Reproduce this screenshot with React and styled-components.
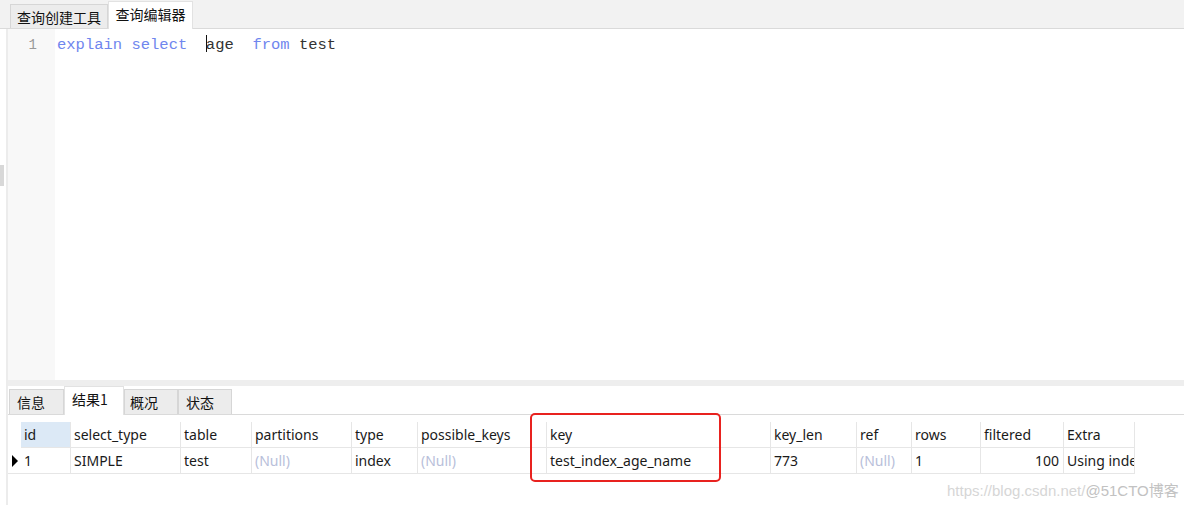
import React from 'react';
import styled, { createGlobalStyle } from 'styled-components';

const Global = createGlobalStyle`
  html, body { margin: 0; padding: 0; background: #fff; }
  #root { width: 1184px; height: 505px; overflow: hidden; }
`;

const Window = styled.div`
  position: relative;
  width: 1184px;
  height: 505px;
  display: flex;
  flex-direction: column;
  font-family: "Noto Sans", "Noto Sans CJK SC", sans-serif;
  color: #222;
  background: #fff;
`;

const TabBar = styled.div`
  display: flex;
  align-items: flex-end;
  height: 28px;
  padding-left: ${p => p.$pad}px;
  background: ${p => p.$bg};
  border-bottom: 1px solid #dadada;
  flex-shrink: 0;
`;

const Tab = styled.div`
  box-sizing: border-box;
  height: ${p => (p.$active ? p.$h + 4 : p.$h)}px;
  width: ${p => p.$w}px;
  display: flex;
  align-items: center;
  justify-content: ${p => (p.$left ? 'flex-start' : 'center')};
  padding-left: ${p => (p.$left ? p.$left : 0)}px;
  font-family: "Noto Sans CJK SC", sans-serif;
  font-size: 14px;
  color: #111;
  background: ${p => (p.$active ? '#fff' : '#ececec')};
  border: 1px solid #d6d6d6;
  border-bottom: none;
  margin-bottom: ${p => (p.$active ? -1 : 0)}px;
  ${p => p.$active && 'border-color: #e2e2e2; padding-bottom: 4px;'}
`;

const Body = styled.div`
  flex: 1;
  display: flex;
  min-height: 0;
`;

const LeftStrip = styled.div`
  width: 6px;
  flex-shrink: 0;
  border-right: 2px solid #ececec;
  background: #fff;
  padding-top: 136px;
`;

const Handle = styled.div`
  width: 4px;
  height: 21px;
  background: #d8d8d8;
`;

const Content = styled.div`
  flex: 1;
  display: flex;
  flex-direction: column;
  min-width: 0;
`;

const Editor = styled.div`
  height: 351px;
  display: flex;
  flex-shrink: 0;
`;

const Gutter = styled.div`
  width: 47px;
  background: #f8f8f8;
  box-sizing: border-box;
  padding: 6px 18px 0 0;
  text-align: right;
  font-family: "Liberation Mono", monospace;
  font-size: 14px;
  line-height: 20px;
  color: #999;
`;

const Code = styled.div`
  flex: 1;
  padding: 6px 0 0 2px;
  font-family: "Liberation Mono", monospace;
  font-size: 15.5px;
  line-height: 20px;
  color: #333;
  white-space: pre;
`;

const Kw = styled.span`
  color: #6f86ee;
`;

const Caret = styled.span`
  display: inline-block;
  width: 1px;
  height: 17px;
  background: #111;
  vertical-align: -3px;
  margin-right: -1px;
`;

const Splitter = styled.div`
  height: 6px;
  background: #eeeeee;
  flex-shrink: 0;
`;

const Results = styled.div`
  flex: 1;
  padding-top: 7px;
`;

const Grid = styled.div`
  display: grid;
  grid-template-columns: ${p => p.$cols};
  width: max-content;
  font-size: 14px;
`;

const Cell = styled.div`
  box-sizing: border-box;
  height: 26px;
  display: flex;
  align-items: center;
  justify-content: ${p => (p.$right ? 'flex-end' : 'flex-start')};
  padding: 0 4px 0 3px;
  white-space: nowrap;
  overflow: hidden;
  border-right: 1px solid #e6e6e6;
  border-bottom: 1px solid #e6e6e6;
  background: ${p => (p.$sel ? '#dce9f6' : '#fff')};
  color: ${p => (p.$null ? '#b8c0da' : '#1a1a1a')};
`;

const Marker = styled.div`
  box-sizing: border-box;
  height: 26px;
  display: flex;
  align-items: center;
  padding-left: 4px;
  border-bottom: 1px solid ${p => (p.$line ? '#e6e6e6' : 'transparent')};
`;

const Arrow = styled.div`
  width: 0;
  height: 0;
  border-top: 6px solid transparent;
  border-bottom: 6px solid transparent;
  border-left: 6px solid #000;
`;

const Highlight = styled.div`
  position: absolute;
  left: 530px;
  top: 413px;
  width: 191px;
  height: 69px;
  box-sizing: border-box;
  border: 2.5px solid #e8221f;
  border-radius: 5px;
  pointer-events: none;
`;

const Watermark = styled.div`
  position: absolute;
  left: 947px;
  top: 479px;
  font-family: "Liberation Sans", "Noto Sans CJK SC", sans-serif;
  font-size: 15px;
  color: #d6d6d6;
  white-space: nowrap;
  span { color: #c2c2c2; }
`;

const columns = [
  ['id', 50],
  ['select_type', 110],
  ['table', 71],
  ['partitions', 100],
  ['type', 66],
  ['possible_keys', 129],
  ['key', 224],
  ['key_len', 86],
  ['ref', 55],
  ['rows', 69],
  ['filtered', 83],
  ['Extra', 71],
];

const row = [
  { v: '1' },
  { v: 'SIMPLE' },
  { v: 'test' },
  { v: '(Null)', n: true },
  { v: 'index' },
  { v: '(Null)', n: true },
  { v: 'test_index_age_name' },
  { v: '773' },
  { v: '(Null)', n: true },
  { v: '1' },
  { v: '100', r: true },
  { v: 'Using index' },
];

export default function App() {
  const cols = '13px ' + columns.map(c => c[1] + 'px').join(' ');
  return (
    <Window>
      <Global />
      <TabBar $pad={10} $bg="#f2f2f2">
        <Tab $h={24} $w={98}>查询创建工具</Tab>
        <Tab $h={24} $w={85} $active>查询编辑器</Tab>
      </TabBar>
      <Body>
        <LeftStrip>
          <Handle />
        </LeftStrip>
        <Content>
          <Editor>
            <Gutter>1</Gutter>
            <Code>
              <Kw>explain</Kw> <Kw>select</Kw>  <Caret />age  <Kw>from</Kw> test
            </Code>
          </Editor>
          <Splitter />
          <TabBar $pad={1} $bg="#fff">
            <Tab $h={25} $w={55} $left={7}>信息</Tab>
            <Tab $h={25} $w={60} $left={7} $active>结果1</Tab>
            <Tab $h={25} $w={54} $left={5}>概况</Tab>
            <Tab $h={25} $w={54} $left={7}>状态</Tab>
          </TabBar>
          <Results>
            <Grid $cols={cols}>
              <Marker />
              {columns.map((c, i) => (
                <Cell key={c[0]} $sel={i === 0}>{c[0]}</Cell>
              ))}
              <Marker $line>
                <Arrow />
              </Marker>
              {row.map((c, i) => (
                <Cell key={i} $null={c.n} $right={c.r}>{c.v}</Cell>
              ))}
            </Grid>
          </Results>
        </Content>
      </Body>
      <Highlight />
      <Watermark>https://blog.csdn.net/<span>@51CTO博客</span></Watermark>
    </Window>
  );
}
